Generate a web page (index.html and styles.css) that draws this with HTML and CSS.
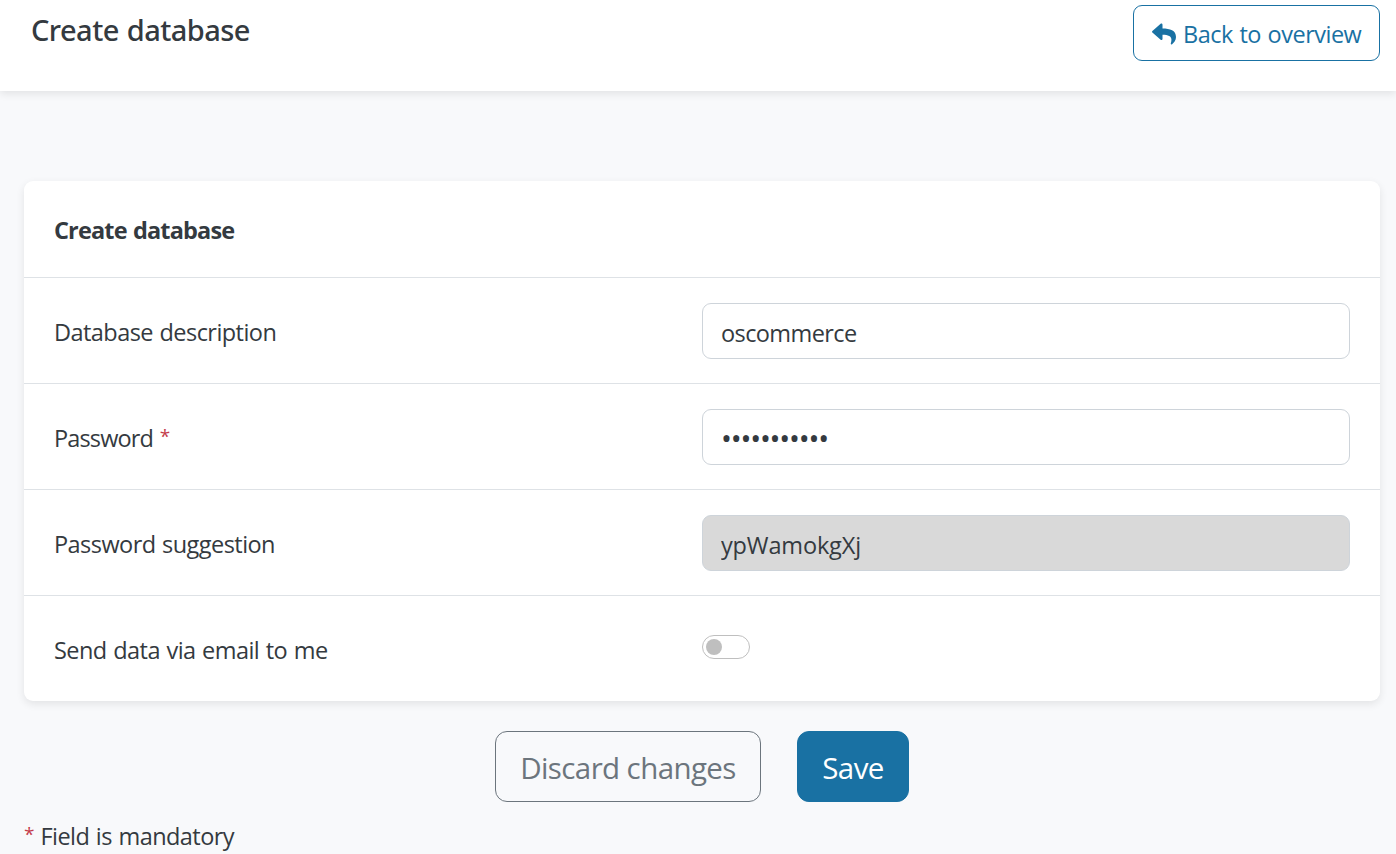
FILE: index.html
```html
<!DOCTYPE html>
<html lang="en">
<head>
<meta charset="utf-8">
<title>Create database</title>
<link rel="stylesheet" href="styles.css">
</head>
<body>
<header class="topbar">
  <h1 class="page-title">Create database</h1>
  <a class="back-button">
    <svg class="back-icon" viewBox="0 0 512 512" aria-hidden="true"><path fill="currentColor" d="M8.309 189.836L184.313 37.851C199.719 24.546 224 35.347 224 56.015v80.053c160.629 1.839 288 34.032 288 186.258 0 61.441-39.581 122.309-83.333 154.132-13.653 9.931-33.111-2.533-28.077-18.631 45.344-145.012-21.507-183.51-176.59-185.742V360c0 20.7-24.3 31.453-39.687 18.164l-176.004-152c-11.071-9.562-11.086-26.753 0-36.328z"/></svg>
    <span class="back-label">Back to overview</span>
  </a>
</header>
<main class="content">
  <form class="card">
    <h2 class="card-title"><span>Create database</span></h2>
    <div class="row">
      <label class="label">Database description</label>
      <input class="field" type="text" value="oscommerce">
    </div>
    <div class="row">
      <label class="label"><span class="label-tight">Password</span> <span class="required">*</span></label>
      <input class="field field-password" type="password" value="abcdefghijk">
    </div>
    <div class="row">
      <label class="label">Password suggestion</label>
      <input class="field field-readonly" type="text" value="ypWamokgXj" readonly>
    </div>
    <div class="row">
      <label class="label">Send data via email to me</label>
      <span class="switch"><span class="knob"></span></span>
    </div>
  </form>
  <div class="actions">
    <button class="button button-discard" type="button">Discard changes</button>
    <button class="button button-save" type="button">Save</button>
  </div>
  <p class="note"><span class="required">*</span> Field is mandatory</p>
</main>
</body>
</html>
```
FILE: styles.css
```css
* { box-sizing: border-box; }

body {
  margin: 0;
  height: 854px;
  overflow: hidden;
  background: #f8f9fb;
  color: #343a40;
  font-family: "Open Sans", "Noto Sans", sans-serif;
  font-size: 23.5px;
  font-weight: 400;
  letter-spacing: -0.55px;
  word-spacing: 1px;
  line-height: 36px;
}

.topbar {
  display: flex;
  justify-content: space-between;
  align-items: flex-start;
  height: 91px;
  padding: 5px 16px 0 32px;
  background: #fff;
  box-shadow: 0 3px 8px rgba(0, 0, 0, 0.09);
}

.page-title {
  margin: 7px 0 0 -1px;
  font-family: "Noto Sans", "Open Sans", sans-serif;
  font-size: 29px;
  font-weight: 500;
  letter-spacing: -0.55px;
  line-height: 36px;
}

.back-button {
  display: flex;
  align-items: center;
  gap: 7px;
  width: 247px;
  height: 56px;
  padding: 1px 0 0 18px;
  border: 1px solid #1971a3;
  border-radius: 9px;
  color: #1971a3;
  white-space: nowrap;
}

.back-icon { width: 24px; height: 24px; flex: none; }

.back-label { letter-spacing: -0.5px; }

.content { padding: 90px 16px 0 24px; }

.card {
  height: 520px;
  border-radius: 9px;
  background: #fff;
  box-shadow: 0 3px 8px rgba(0, 0, 0, 0.09);
}

.card-title {
  display: flex;
  align-items: center;
  height: 96px;
  margin: 0;
  padding: 1px 30px 0;
  font-size: 23.5px;
  font-weight: 700;
  letter-spacing: -0.85px;
}

.row {
  display: grid;
  grid-template-columns: 648px 648px;
  align-items: center;
  height: 106px;
  padding: 0 30px;
  border-top: 1px solid #dee2e6;
}

.label { padding-top: 2px; }

.label-tight { letter-spacing: -0.85px; }

.required {
  color: #c43d4b;
  font-size: 19px;
  line-height: 1;
  vertical-align: 4px;
}

.field {
  width: 648px;
  height: 56px;
  padding: 5px 18px 0;
  border: 1px solid #ced4da;
  border-radius: 9px;
  outline: none;
  background: #fff;
  color: #343a40;
  font: inherit;
  letter-spacing: -0.6px;
}

.field-password {
  padding-top: 2px;
  font-size: 29px;
  letter-spacing: -1.18px;
}

.field-readonly { background: #d9d9d9; letter-spacing: -0.15px; }

.switch {
  display: flex;
  align-items: center;
  width: 48px;
  height: 24px;
  margin-top: -4px;
  padding-left: 3px;
  border: 1px solid #bfbfbf;
  border-radius: 12px;
}

.knob {
  width: 16px;
  height: 16px;
  border-radius: 50%;
  background: #bfbfbf;
}

.actions {
  display: flex;
  justify-content: center;
  gap: 36px;
  padding-top: 30px;
}

.button {
  height: 71px;
  padding: 2px 0 0;
  border: 1px solid #6c757d;
  border-radius: 12px;
  background: transparent;
  color: #6c757d;
  font: inherit;
  font-size: 29.5px;
  letter-spacing: -0.6px;
}

.button-discard { width: 266px; }

.button-save {
  width: 112px;
  border-color: #1971a3;
  background: #1971a3;
  color: #fff;
}

.note { margin: 16px 0 0; }
```
